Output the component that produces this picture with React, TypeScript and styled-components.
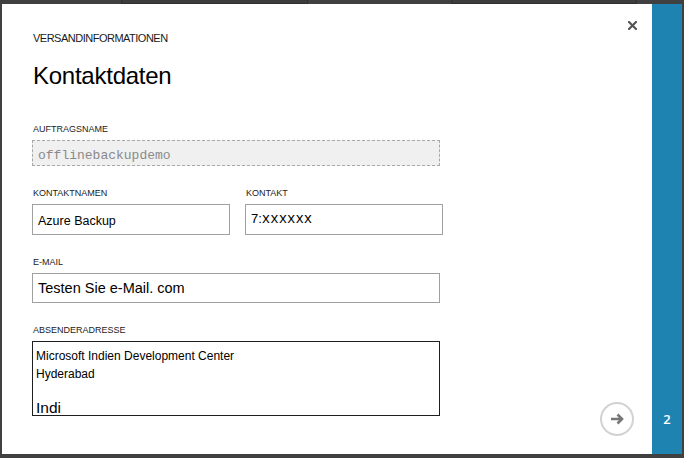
import React from "react";
import styled, { createGlobalStyle } from "styled-components";

const Global = createGlobalStyle`
  html, body { margin: 0; padding: 0; background: #404040; }
  body { font-family: "Liberation Sans", Arial, sans-serif; }
  * { box-sizing: border-box; }
`;

const Screen = styled.div`
  width: 684px;
  height: 458px;
  background: #404040;
  display: flex;
  flex-direction: column;
  overflow: hidden;
`;

const Backdrop = styled.div`
  height: 4px;
  display: flex;
  flex-shrink: 0;
`;

const GhostWindow = styled.div<{ $gap: number; $width: number }>`
  margin-left: ${(p) => p.$gap}px;
  width: ${(p) => p.$width}px;
  height: 4px;
  border: 1px solid #2f2f2f;
  border-top: none;
  background: #3c3c3c;
`;

const Dialog = styled.div`
  display: flex;
  height: 450px;
  margin: 0 2px;
  flex-shrink: 0;
`;

const Panel = styled.div`
  flex: 1;
  background: #ffffff;
  display: flex;
`;

const Form = styled.div`
  width: 408px;
  padding: 28px 0 0 30px;
  box-sizing: content-box;
  display: flex;
  flex-direction: column;
`;

const Kicker = styled.div`
  font-size: 11px;
  line-height: 13px;
  letter-spacing: -0.5px;
  color: #1a1a1a;
  padding-left: 1px;
`;

const Title = styled.h1`
  margin: 17px 0 0 0;
  font-weight: normal;
  font-size: 24px;
  line-height: 28px;
  letter-spacing: -0.25px;
  color: #000;
  padding-left: 1px;
`;

const Fields = styled.div`
  margin-top: 34px;
  display: flex;
  flex-direction: column;
  gap: 22px;
`;

const Row = styled.div`
  display: grid;
  grid-template-columns: 198px 198px;
  column-gap: 15px;
`;

const Field = styled.div`
  display: flex;
  flex-direction: column;
`;

const Label = styled.div`
  font-size: 9px;
  line-height: 11px;
  color: #222;
  margin-bottom: 5px;
  padding-left: 1px;
`;

const Box = styled.div<{ $height: number; $variant?: "disabled" | "normal" | "area"; $padTop?: number }>`
  height: ${(p) => p.$height}px;
  width: 100%;
  border: 1px ${(p) => (p.$variant === "disabled" ? "dashed" : "solid")}
    ${(p) => (p.$variant === "disabled" ? "#a8a8a8" : p.$variant === "area" ? "#1e1e1e" : "#a0a0a0")};
  background: ${(p) => (p.$variant === "disabled" ? "#f0f0f0" : "#fff")};
  padding: ${(p) => p.$padTop ?? 0}px 4px 0 ${(p) => (p.$variant === "area" ? 3 : 5)}px;
  overflow: hidden;
  white-space: nowrap;
`;

const MonoText = styled.span<{ $color?: string; $size?: number }>`
  font-family: "Liberation Mono", "Courier New", monospace;
  font-size: ${(p) => p.$size ?? 13}px;
  color: ${(p) => p.$color ?? "#000"};
`;

const SansText = styled.span<{ $size: number; $lh?: number }>`
  display: block;
  font-size: ${(p) => p.$size}px;
  line-height: ${(p) => p.$lh ?? p.$size + 4}px;
  color: #000;
`;

const InlineSans = styled.span`
  font-size: 13px;
  color: #000;
`;

const Actions = styled.div`
  flex: 1;
  display: flex;
  flex-direction: column;
  align-items: flex-end;
  justify-content: space-between;
  padding: 17px 0 18px 0;
`;

const CloseButton = styled.button`
  width: 9px;
  height: 9px;
  padding: 0;
  margin-right: 15px;
  border: none;
  background: none;
  display: flex;
  cursor: pointer;
`;

const NextButton = styled.button`
  width: 34px;
  height: 34px;
  margin-right: 18px;
  border-radius: 50%;
  border: 2px solid #d2d2d2;
  background: #fff;
  padding: 0;
  display: flex;
  align-items: center;
  justify-content: center;
  cursor: pointer;
`;

const Sidebar = styled.div`
  width: 30px;
  background: #1e83b1;
  display: flex;
  flex-direction: column;
  justify-content: flex-end;
  align-items: center;
  padding-bottom: 27px;
`;

const StepNumber = styled.div`
  font-family: "Open Sans", "Liberation Sans", sans-serif;
  font-weight: 600;
  font-size: 13px;
  line-height: 16px;
  color: #fff;
`;

export default function App() {
  return (
    <>
      <Global />
      <Screen>
        <Backdrop>
          <GhostWindow $gap={121} $width={187} />
          <GhostWindow $gap={143} $width={186} />
        </Backdrop>
        <Dialog>
          <Panel>
            <Form>
              <Kicker>VERSANDINFORMATIONEN</Kicker>
              <Title>Kontaktdaten</Title>
              <Fields>
                <Field>
                  <Label>AUFTRAGSNAME</Label>
                  <Box $height={26} $variant="disabled" $padTop={4}>
                    <MonoText $color="#8a8a8a">offlinebackupdemo</MonoText>
                  </Box>
                </Field>
                <Row>
                  <Field>
                    <Label>KONTAKTNAMEN</Label>
                    <Box $height={31} $padTop={8}>
                      <SansText $size={12.5} $lh={16}>Azure Backup</SansText>
                    </Box>
                  </Field>
                  <Field>
                    <Label>KONTAKT</Label>
                    <Box $height={31} $padTop={4}>
                      <InlineSans>7:</InlineSans>
                      <MonoText $size={14}>xxxxxx</MonoText>
                    </Box>
                  </Field>
                </Row>
                <Field>
                  <Label>E-MAIL</Label>
                  <Box $height={30} $padTop={5}>
                    <SansText $size={14.5} $lh={18}>Testen Sie e-Mail. com</SansText>
                  </Box>
                </Field>
                <Field>
                  <Label>ABSENDERADRESSE</Label>
                  <Box $height={75} $variant="area" $padTop={5}>
                    <SansText $size={12} $lh={18}>Microsoft Indien Development Center</SansText>
                    <SansText $size={12} $lh={18}>Hyderabad</SansText>
                    <SansText $size={15.5} $lh={17}>&nbsp;</SansText>
                    <SansText $size={15.5} $lh={16}>Indi</SansText>
                  </Box>
                </Field>
              </Fields>
            </Form>
            <Actions>
              <CloseButton aria-label="Schließen">
                <svg width="9" height="9" viewBox="0 0 9 9">
                  <path d="M1 1 L8 8 M8 1 L1 8" stroke="#555" strokeWidth="2.2" strokeLinecap="square" />
                </svg>
              </CloseButton>
              <NextButton aria-label="Weiter">
                <svg width="16" height="14" viewBox="0 0 16 14">
                  <path d="M2 7 H13 M8.5 2.5 L13 7 L8.5 11.5" stroke="#777" strokeWidth="2.6" fill="none" strokeLinecap="butt" strokeLinejoin="miter" />
                </svg>
              </NextButton>
            </Actions>
          </Panel>
          <Sidebar>
            <StepNumber>2</StepNumber>
          </Sidebar>
        </Dialog>
      </Screen>
    </>
  );
}
